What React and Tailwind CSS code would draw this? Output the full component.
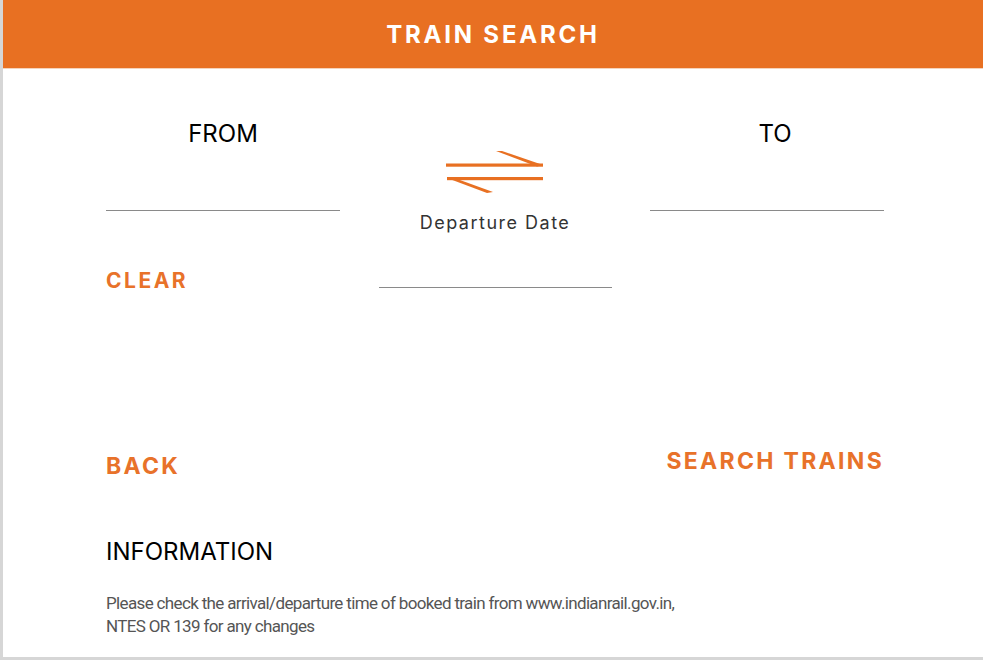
import { useState } from 'react'

function SwapIcon() {
  return (
    <svg width="100" height="44" viewBox="0 0 100 44" fill="#E87022">
      {/* top arrow: points right */}
      <rect x="1" y="13.5" width="97" height="3.2" />
      <polygon points="51,1 57,1 98,15 92,16.5" />
      {/* bottom arrow: points left */}
      <rect x="2" y="27" width="96" height="3.2" />
      <polygon points="2,28 8,27.5 48,42 42,43" />
    </svg>
  )
}

function App() {
  const [from, setFrom] = useState('')
  const [to, setTo] = useState('')
  const [date, setDate] = useState('')

  const handleSwap = () => {
    setFrom(to)
    setTo(from)
  }

  const handleClear = () => {
    setFrom('')
    setTo('')
    setDate('')
  }

  return (
    <div className="h-[660px] bg-white border-l-[3px] border-b-[3px] border-[#d6d6d6] font-['Inter',sans-serif] overflow-hidden">
      {/* Header */}
      <div className="h-[69px] bg-[#E87022] flex items-center justify-center border-b border-[#f5d3bb]">
        <h1 className="pt-[2px] text-white text-[24px] font-bold tracking-[2.8px] leading-none">TRAIN SEARCH</h1>
      </div>

      <div className="pt-[2px] pl-[103px] pr-[99px]">
        {/* Stations and date */}
        <div className="grid grid-cols-[234px_233px_234px] justify-between">
          <div className="pt-[49px]">
            <p className="text-center text-[24px] leading-[27px] text-black">FROM</p>
            <input
              value={from}
              onChange={(e) => setFrom(e.target.value)}
              className="block w-full h-[64px] border-b border-[#8a8a8a] outline-none text-[18px] bg-transparent"
            />
            <button
              onClick={handleClear}
              className="mt-[58px] block text-[#E8722A] text-[21px] font-bold tracking-[2.5px] leading-[24px]"
            >
              CLEAR
            </button>
          </div>

          <div className="pt-[79px] flex flex-col items-center">
            <button onClick={handleSwap} className="block">
              <SwapIcon />
            </button>
            <p className="mt-[19px] text-[18px] leading-[20px] tracking-[1.5px] text-[#333]">Departure Date</p>
            <input
              value={date}
              onChange={(e) => setDate(e.target.value)}
              className="block w-full h-[55px] border-b border-[#8a8a8a] outline-none text-[18px] bg-transparent"
            />
          </div>

          <div className="pt-[49px]">
            <p className="pl-[16px] text-center text-[24px] leading-[27px] text-black">TO</p>
            <input
              value={to}
              onChange={(e) => setTo(e.target.value)}
              className="block w-full h-[64px] border-b border-[#8a8a8a] outline-none text-[18px] bg-transparent"
            />
          </div>
        </div>

        {/* Actions */}
        <div className="mt-[156px] flex justify-between items-start">
          <button className="mt-[5px] text-[#E8722A] text-[23px] font-bold tracking-[2.3px] leading-[24px]">BACK</button>
          <button className="text-[#E8722A] text-[23px] font-bold tracking-[2.3px] leading-[24px]">SEARCH TRAINS</button>
        </div>

        {/* Information */}
        <h2 className="mt-[60px] text-[24px] leading-[28px] text-black">INFORMATION</h2>
        <p className="mt-[26px] font-['Roboto',sans-serif] text-[17px] leading-[23px] tracking-[-0.65px] text-[#555]">
          Please check the arrival/departure time of booked train from www.indianrail.gov.in,
          <br />
          NTES OR 139 for any changes
        </p>
      </div>
    </div>
  )
}

export default App
